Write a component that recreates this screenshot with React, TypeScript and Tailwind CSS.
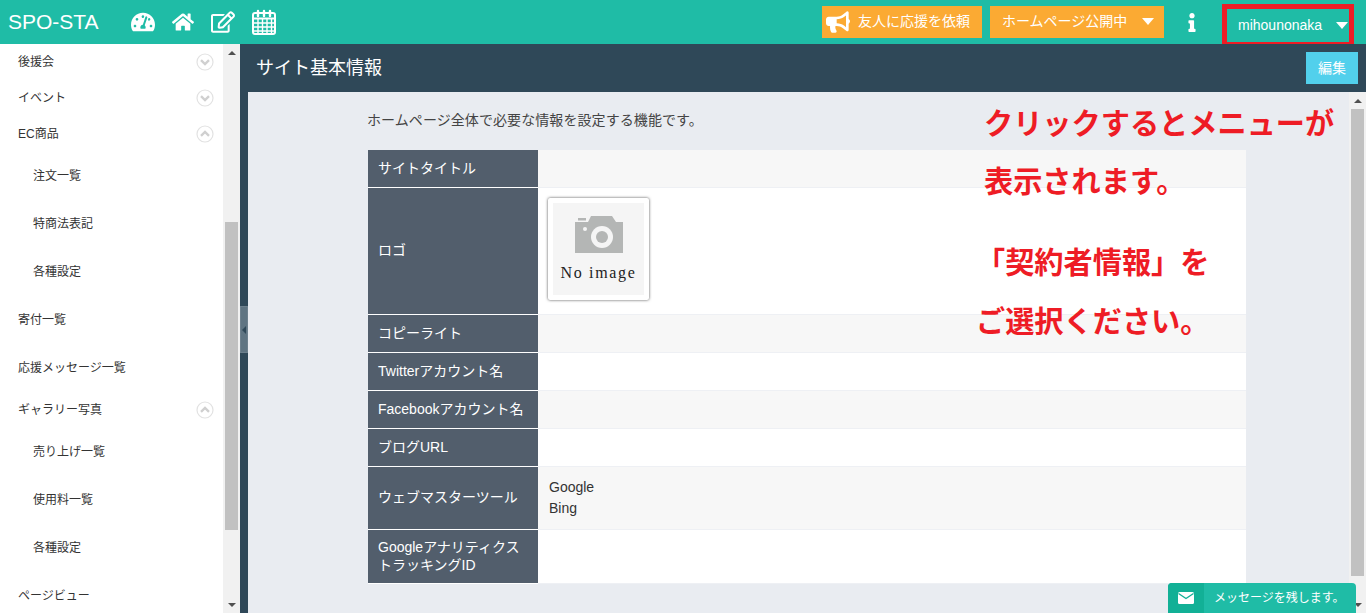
import { FaBullhorn, FaHome, FaInfo, FaRegEdit, FaTachometerAlt } from 'react-icons/fa';

const FONT = "font-['Liberation_Sans','Noto_Sans_CJK_JP',sans-serif]";

type SideItem = { label: string; kind: 'open' | 'closed' | 'sub' | 'link' };

const SIDE_ITEMS: SideItem[] = [
  { label: '後援会', kind: 'closed' },
  { label: 'イベント', kind: 'closed' },
  { label: 'EC商品', kind: 'open' },
  { label: '注文一覧', kind: 'sub' },
  { label: '特商法表記', kind: 'sub' },
  { label: '各種設定', kind: 'sub' },
  { label: '寄付一覧', kind: 'link' },
  { label: '応援メッセージ一覧', kind: 'link' },
  { label: 'ギャラリー写真', kind: 'open' },
  { label: '売り上げ一覧', kind: 'sub' },
  { label: '使用料一覧', kind: 'sub' },
  { label: '各種設定', kind: 'sub' },
  { label: 'ページビュー', kind: 'link' },
];

const CalendarIcon = () => (
  <svg width="24" height="26" viewBox="0 0 24 26" fill="none" stroke="white">
    <rect x="1" y="4" width="22" height="21" rx="2" strokeWidth="2" />
    <path d="M1 9.5h22" strokeWidth="2" />
    <path d="M6 2v5M12 2v5M18 2v5" strokeWidth="2.4" strokeLinecap="round" />
    <path d="M1 14h22M1 18h22M1 22h22M6 10v14M10.5 10v14M15 10v14M19.5 10v14" strokeWidth="1.4" />
  </svg>
);

const Chevron = ({ up }: { up: boolean }) => (
  <svg width="18" height="18" viewBox="0 0 18 18" fill="none">
    <circle cx="9" cy="9" r="8" stroke="#e2e2e2" strokeWidth="1.2" />
    <path d={up ? 'M5 10.8 9 7l4 3.8' : 'M5 7.2 9 11l4-3.8'} stroke="#d0d0d0" strokeWidth="2.4" />
  </svg>
);

const Caret = () => (
  <div className="w-0 h-0 border-x-[6px] border-x-transparent border-t-[7px] border-t-white" />
);

const Scrollbar = ({ thumbTop, thumbHeight }: { thumbTop: string; thumbHeight: string }) => (
  <div className="w-[17px] shrink-0 bg-[#f1f1f1] flex flex-col items-center h-full overflow-hidden">
    <div className="h-[17px] shrink-0 flex items-center justify-center">
      <div className="w-0 h-0 border-x-[4px] border-x-transparent border-b-[4px] border-b-[#505050]" />
    </div>
    <div className={`${thumbTop} ${thumbHeight} w-[13px] shrink-0 bg-[#c1c1c1]`} />
    <div className="mt-auto h-[17px] shrink-0 flex items-center justify-center">
      <div className="w-0 h-0 border-x-[4px] border-x-transparent border-t-[4px] border-t-[#505050]" />
    </div>
  </div>
);

const Row = ({ label, h, odd, children }: { label: string; h: string; odd: boolean; children?: React.ReactNode }) => (
  <div className={`flex ${h} border-b border-[#eef0f4] ${odd ? 'bg-[#f7f7f7]' : 'bg-white'}`}>
    <div className="w-[170px] shrink-0 bg-[#525e6c] text-white text-[14px] leading-[18px] px-[10px] pb-[2px] flex items-center border-b border-white -mb-px">
      <span>{label}</span>
    </div>
    <div className="flex-1 px-[11px] text-[14px] text-[#333] flex items-center">{children}</div>
  </div>
);

export default function App() {
  return (
    <div className={`${FONT} relative w-[1366px] h-[613px] overflow-hidden flex flex-col bg-white`}>
      <header className="h-[44px] shrink-0 bg-[#1fbca6] flex items-center text-white">
        <div className="ml-[8px] w-[123px] text-[21px]">SPO-STA</div>
        <div className="flex items-center gap-[17px]">
          <FaTachometerAlt className="w-[24px] h-[24px]" />
          <FaHome className="w-[22px] h-[22px]" />
          <FaRegEdit className="w-[24px] h-[24px]" />
          <CalendarIcon />
        </div>
        <div className="ml-auto flex items-center mr-[12px]">
          <button className="h-[32px] w-[160px] bg-[#fbaa33] text-[14px] flex items-center pl-[4px] mt-[-1px]">
            <FaBullhorn className="w-[24px] h-[22px] mr-[8px]" />
            友人に応援を依頼
          </button>
          <button className="h-[32px] w-[174px] ml-[8px] bg-[#fbaa33] text-[14px] flex items-center pl-[12px] mt-[-1px]">
            ホームページ公開中
            <span className="ml-[15px]"><Caret /></span>
          </button>
          <FaInfo className="w-[12px] h-[19px] ml-[22px] mr-[24px]" />
          <div className="w-[132px] h-[43px] mt-[7px] border-[5px] border-[#ee1c25] flex items-center pl-[11px] text-[14px] pb-[1px]">
            mihounonaka
            <span className="ml-auto mr-[1px]"><Caret /></span>
          </div>
        </div>
      </header>

      <div className="flex-1 min-h-0 flex">
        <aside className="w-[223px] shrink-0 overflow-hidden text-[12px] text-[#333]">
          <div>
            {SIDE_ITEMS.map((item, i) => (
              <div
                key={i}
                className={`flex items-center ${item.kind === 'sub' || item.kind === 'link' ? 'h-[48px]' : 'h-[36px]'} ${item.kind === 'sub' ? 'pl-[33px]' : 'pl-[18px]'}`}
              >
                <span>{item.label}</span>
                {(item.kind === 'open' || item.kind === 'closed') && (
                  <span className="ml-auto mr-[9px] flex">
                    <Chevron up={item.kind === 'open'} />
                  </span>
                )}
              </div>
            ))}
          </div>
        </aside>
        <Scrollbar thumbTop="mt-[161px]" thumbHeight="h-[308px]" />

        <main className="relative flex-1 min-w-0 flex flex-col bg-[#2f4858] pl-[8px]">
          <div className="absolute left-0 top-[262px] w-[8px] h-[47px] bg-[#5f7482] border border-[#6d808d] flex items-center justify-center">
            <div className="w-0 h-0 border-y-[4px] border-y-transparent border-r-[4px] border-r-[#2f4858]" />
          </div>
          <div className="h-[48px] shrink-0 flex items-center justify-between pl-[8px] pr-[8px]">
            <h1 className="text-[18px] text-white">サイト基本情報</h1>
            <button className="w-[52px] h-[32px] bg-[#52d0ec] text-white text-[14px]">編集</button>
          </div>
          <div className="flex-1 min-h-0 flex bg-[#e9ecf1]">
            <div className="flex-1 min-w-0 pl-[120px] pr-[103px] pt-[18px]">
              <p className="text-[14px] leading-[20px] tracking-[0.08px] text-[#444] -ml-[1px] mb-[20px]">ホームページ全体で必要な情報を設定する機能です。</p>
              <Row label="サイトタイトル" h="h-[38px]" odd />
              <Row label="ロゴ" h="h-[127px]" odd={false}>
                <div className="-ml-px mb-[5px] w-[101px] h-[102px] p-[5px] bg-white rounded-[2px] shadow-[0_0_3px_rgba(0,0,0,0.7)]">
                  <div className="w-full h-full bg-[#f5f5f5] flex flex-col items-center pt-[13px]">
                    <svg width="48" height="37" viewBox="0 0 48 37">
                      <path fill="#b4b6b5" d="M0 6h13l3-6h21l4 6h7v31H0z" />
                      <rect x="3" y="2" width="8" height="2.500" fill="#b4b6b5" />
                      <circle cx="27" cy="21" r="11" fill="#f5f5f5" />
                      <circle cx="27" cy="21" r="6" fill="#b4b6b5" />
                      <circle cx="10" cy="13" r="2" fill="#f5f5f5" />
                    </svg>
                    <div className="mt-[11px] font-['Liberation_Serif',serif] text-[16px] leading-[18px] tracking-[1.7px] text-[#222] whitespace-pre">No image</div>
                  </div>
                </div>
              </Row>
              <Row label="コピーライト" h="h-[38px]" odd />
              <Row label="Twitterアカウント名" h="h-[38px]" odd={false} />
              <Row label="Facebookアカウント名" h="h-[38px]" odd />
              <Row label="ブログURL" h="h-[38px]" odd={false} />
              <Row label="ウェブマスターツール" h="h-[63px]" odd>
                <div className="leading-[21px]">
                  <div>Google</div>
                  <div>Bing</div>
                </div>
              </Row>
              <Row label="GoogleアナリティクストラッキングID" h="h-[54px]" odd={false} />
            </div>
            <Scrollbar thumbTop="mt-0" thumbHeight="h-[467px]" />
          </div>
        </main>
      </div>

      <div className="absolute left-[975px] top-[95px] w-[372px] text-[#ee1c25] text-[29.2px] font-bold leading-[58px] pointer-events-none">
        <div className="pl-[9px]">クリックするとメニューが</div>
        <div className="pl-[9px]">表示されます。</div>
        <div className="mt-[23px] pl-[1px]">「契約者情報」を</div>
        <div className="mt-[1px] pl-[1px]">ご選択ください。</div>
      </div>

      <div className="absolute left-[1168px] bottom-0 w-[188px] h-[30px] bg-[#1fbca6] rounded-t-[4px] overflow-hidden flex items-center text-white text-[12px]">
        <div className="w-[36px] h-full bg-[#12b096] flex items-center justify-center">
          <svg width="16" height="12" viewBox="0 0 16 12">
            <rect width="16" height="12" rx="1.500" fill="white" />
            <path d="M0.500 1.500 8 6.500l7.500-5" fill="none" stroke="#12b096" strokeWidth="1.400" />
          </svg>
        </div>
        <span className="ml-[10px]">メッセージを残します。</span>
      </div>
    </div>
  );
}
